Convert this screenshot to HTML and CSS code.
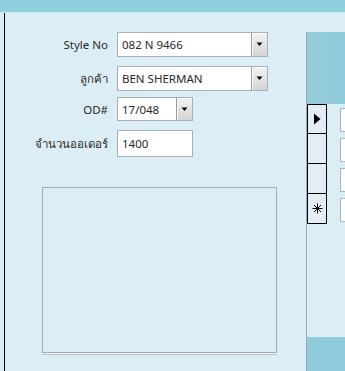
FILE: index.html
```html
<!DOCTYPE html>
<html lang="th">
<head>
    <meta charset="UTF-8">
    <meta name="viewport" content="width=device-width, initial-scale=1.0">
    <title>Order</title>
    <link rel="stylesheet" href="styles.css">
</head>
<body>
    <div class="topbar"></div>
    <div class="main">
        <div class="panel">
            <div class="row row-style">
                <label class="lbl">Style No</label>
                <div class="combo wide">
                    <span class="val">082 N 9466</span>
                    <span class="drop"><svg width="7" height="5" viewBox="0 0 7 5"><path d="M0.5 0.5h6L3.5 4z" fill="#000"/></svg></span>
                </div>
            </div>
            <div class="row row-cust">
                <label class="lbl">ลูกค้า</label>
                <div class="combo wide">
                    <span class="val">BEN SHERMAN</span>
                    <span class="drop"><svg width="7" height="5" viewBox="0 0 7 5"><path d="M0.5 0.5h6L3.5 4z" fill="#000"/></svg></span>
                </div>
            </div>
            <div class="row row-od">
                <label class="lbl">OD#</label>
                <div class="combo narrow">
                    <span class="val">17/048</span>
                    <span class="drop"><svg width="7" height="5" viewBox="0 0 7 5"><path d="M0.5 0.5h6L3.5 4z" fill="#000"/></svg></span>
                </div>
            </div>
            <div class="row row-qty">
                <label class="lbl">จำนวนออเดอร์</label>
                <div class="text narrow">
                    <span class="val">1400</span>
                </div>
            </div>
            <div class="frame"></div>
        </div>

        <div class="sub">
            <div class="sub-head"></div>
            <div class="rec">
                <div class="sel"><svg width="8" height="12" viewBox="0 0 8 12"><path d="M1 0.5L7.5 6L1 11.5z" fill="#000"/></svg></div>
                <div class="cell"></div>
            </div>
            <div class="rec">
                <div class="sel"></div>
                <div class="cell"></div>
            </div>
            <div class="rec">
                <div class="sel"></div>
                <div class="cell"></div>
            </div>
            <div class="rec">
                <div class="sel"><svg width="11" height="11" viewBox="0 0 11 11"><path d="M5.5 0.5v10M0.5 5.5h10M2 2l7 7M9 2l-7 7" stroke="#000" stroke-width="1" fill="none"/></svg></div>
                <div class="cell"></div>
            </div>
            <div class="sub-body"></div>
            <div class="sub-foot"></div>
        </div>
    </div>
</body>
</html>
```

FILE: styles.css
```css
html, body {
    margin: 0;
    padding: 0;
    height: 100%;
    overflow: hidden;
}
body {
    font-family: "Noto Sans", Tahoma, sans-serif;
    font-size: 11.5px;
    color: #2A2A2A;
    background-color: #DCEEF5;
}
.topbar {
    height: 12px;
    background-color: #8FCEDB;
    border-bottom: 1px solid #C9E7EF;
}
.main {
    display: flex;
    height: 358px;
}
.panel {
    margin-left: 4px;
    width: 301px;
    border-left: 1px solid #000000;
    padding-top: 19px;
    display: flex;
    flex-direction: column;
}
.row {
    display: flex;
    align-items: center;
}
.lbl {
    width: 103px;
    text-align: right;
    margin-right: 9px;
}
.row-cust {
    margin-top: 9px;
}
.row-od {
    margin-top: 6px;
}
.row-qty {
    margin-top: 9px;
}
.combo, .text {
    height: 25px;
    box-sizing: border-box;
    background-color: #FFFFFF;
    border: 1px solid #A9B0B5;
    display: flex;
    align-items: center;
}
.row-od .combo {
    height: 24px;
}
.row-qty .text {
    height: 27px;
}
.wide {
    width: 151px;
}
.narrow {
    width: 76px;
}
.val {
    flex: 1;
    padding-left: 4px;
    white-space: nowrap;
}
.drop {
    width: 16px;
    height: 23px;
    box-sizing: border-box;
    border-left: 1px solid #9A9A9A;
    box-shadow: inset 1px 1px 0 #FAFAFA;
    background: linear-gradient(#F2F2F2, #D4D4D4);
    display: flex;
    align-items: center;
    justify-content: center;
}
.row-od .drop {
    height: 22px;
}
.frame {
    margin-top: 30px;
    margin-left: 37px;
    width: 235px;
    height: 166px;
    box-sizing: border-box;
    border: 1px solid #A3AAB0;
    box-shadow: 0 1px 0 #EEF6F9, 0 2px 0 #B9C2C8;
}
.sub {
    flex: 1;
    margin-top: 19px;
    border-left: 1px solid #9FA9AF;
    display: flex;
    flex-direction: column;
}
.sub-head {
    height: 72px;
    background: linear-gradient(90deg, #96CBD8, #8ECAD9);
}
.rec {
    display: flex;
    height: 30px;
}
.sel {
    width: 20px;
    box-sizing: border-box;
    border: 1px solid #000000;
    border-top: none;
    background-color: #E3EDF2;
    display: flex;
    align-items: center;
    justify-content: center;
}
.sub-head + .rec .sel {
    border-top: 1px solid #000000;
}
.cell {
    margin: 4px 0 2px 13px;
    flex: 1;
    background-color: #FFFFFF;
    border: 1px solid #AEB6BB;
    border-right: none;
}
.sub-body {
    flex: 1;
    background-color: #DCEEF5;
}
.sub-foot {
    height: 34px;
    background-color: #8FCBDA;
}
```
